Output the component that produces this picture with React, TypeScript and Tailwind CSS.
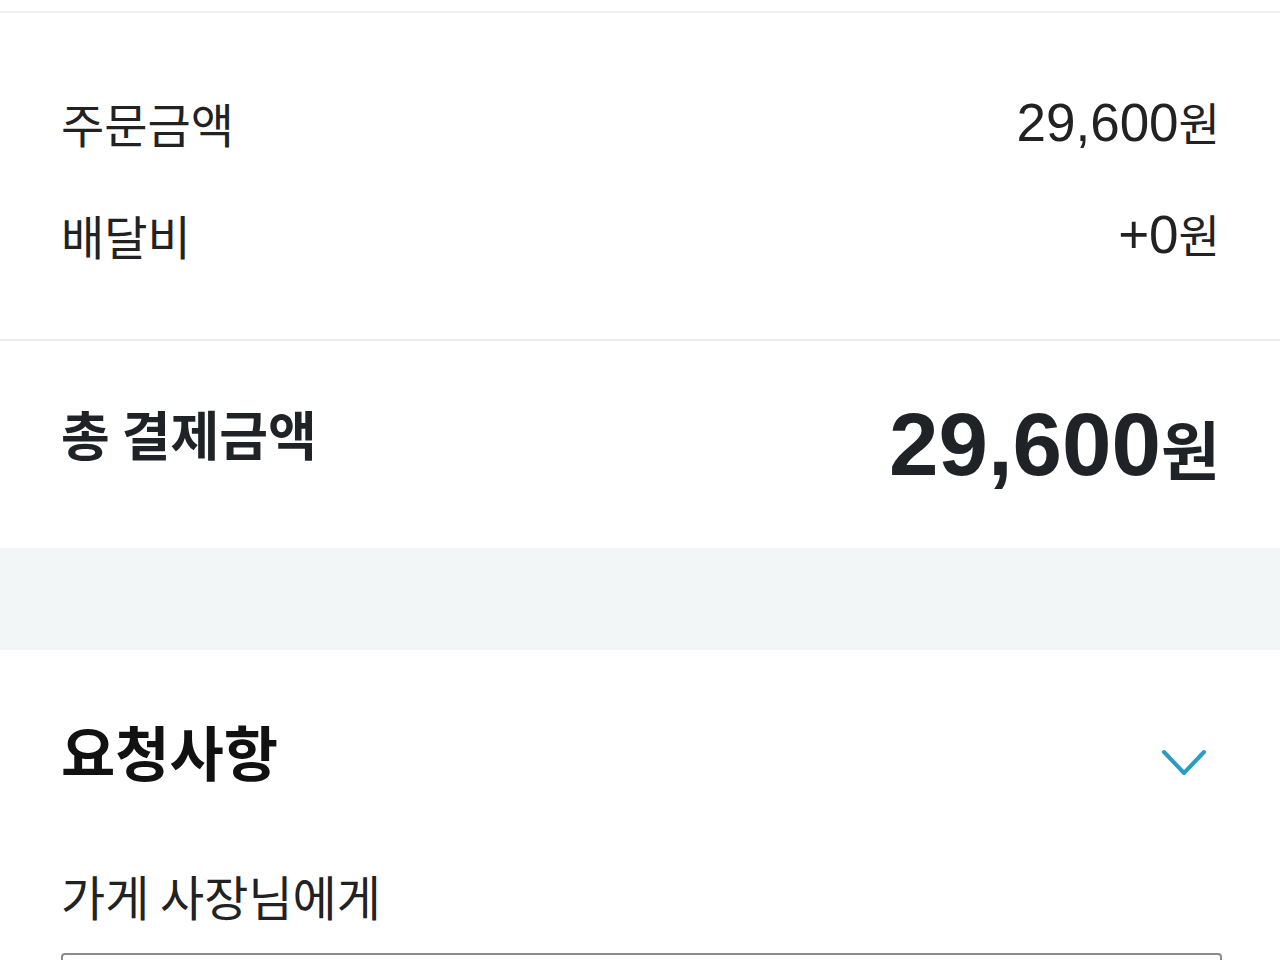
import React from 'react';

const krFont = { fontFamily: '"Noto Sans CJK KR", "Noto Sans", sans-serif' };

const PriceRow: React.FC<{ label: string; value: string }> = ({ label, value }) => (
    <div className="flex items-center justify-between h-[112px]">
        <span className="text-[47px] leading-none text-[#222222] font-['Noto_Sans_CJK_KR',sans-serif]">{label}</span>
        <span className="leading-none text-[#222222] whitespace-nowrap">
            <span className="text-[53px] font-['Liberation_Sans',sans-serif]">{value}</span>
            <span className="text-[45px] font-['Noto_Sans_CJK_KR',sans-serif]">원</span>
        </span>
    </div>
);

const ChevronDown = () => (
    <svg width="46" height="28" viewBox="0 0 46 28" fill="none" className="mt-[26px] mr-[15px]">
        <polyline points="3,3 23,24 43,3" stroke="#2a9dc2" strokeWidth="4" strokeLinecap="round" strokeLinejoin="round" />
    </svg>
);

export default function App() {
    return (
        <div className="w-full h-[960px] overflow-hidden bg-white" style={krFont}>
            {/* order summary */}
            <div className="mt-[11px] border-t-2 border-[#f0f0f0] pt-[53px] pb-[49px] pl-[61px] pr-[60px]">
                <PriceRow label="주문금액" value="29,600" />
                <PriceRow label="배달비" value="+0" />
            </div>

            {/* total */}
            <div className="border-t-2 border-[#ececec] h-[209px] flex items-center justify-between pl-[61px] pr-[60px]">
                <span className="mb-[22px] text-[53px] font-bold leading-none text-[#1f2327] font-['Noto_Sans_CJK_KR',sans-serif]">총 결제금액</span>
                <span className="leading-none text-[#1f2327] whitespace-nowrap font-bold">
                    <span className="text-[89px] font-['Liberation_Sans',sans-serif]">29,600</span>
                    <span className="text-[64px] font-['Noto_Sans_CJK_KR',sans-serif]">원</span>
                </span>
            </div>

            <div className="h-[102px] bg-[#f2f6f7]" />

            {/* request */}
            <div className="pt-[72px] pl-[61px] pr-[58px]">
                <div className="flex items-center justify-between h-[56px]">
                    <h2 className="text-[59px] font-bold leading-none text-[#111111]">요청사항</h2>
                    <ChevronDown />
                </div>
                <div className="mt-[95px] h-[44px] flex items-center text-[48px] leading-none text-[#222222]">가게 사장님에게</div>
                <div className="mt-[36px] h-[140px] border-2 border-[#8c8c8c] rounded-sm" />
            </div>
        </div>
    );
}
